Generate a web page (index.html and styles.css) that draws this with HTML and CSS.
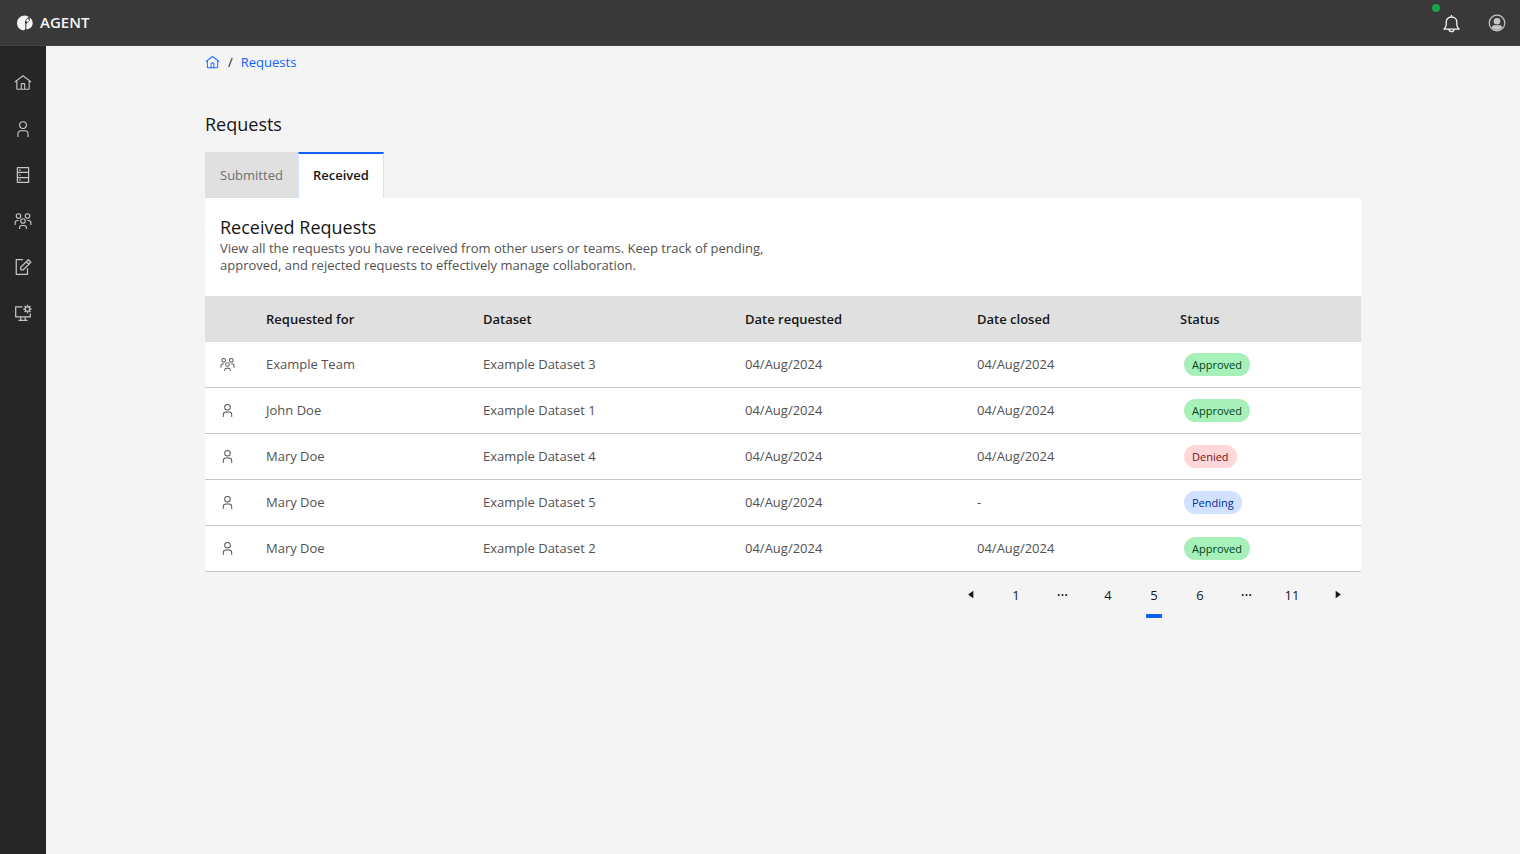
FILE: index.html
```html
<!DOCTYPE html>
<html lang="en">
<head>
    <meta charset="UTF-8">
    <meta name="viewport" content="width=device-width, initial-scale=1.0">
    <title>Requests</title>
    <link rel="stylesheet" href="styles.css">
</head>
<body>
    <!-- Shared icons -->
    <svg class="sprite" aria-hidden="true">
        <symbol id="icon-home" viewBox="0 0 32 32">
            <path d="M16.6123,2.2138a1.01,1.01,0,0,0-1.2427,0L1,13.4194l1.2427,1.5717L4,13.6209V26a2.0041,2.0041,0,0,0,2,2H26a2.0037,2.0037,0,0,0,2-2V13.63L29.7573,15,31,13.4282ZM18,26H14V18h4Zm2,0V18a2.0023,2.0023,0,0,0-2-2H14a2.002,2.002,0,0,0-2,2v8H6V12.0615l10-7.79,10,7.8005V26Z"/>
        </symbol>
        <symbol id="icon-user" viewBox="0 0 32 32">
            <path d="M16,4a5,5,0,1,1-5,5,5,5,0,0,1,5-5m0-2a7,7,0,1,0,7,7A7,7,0,0,0,16,2Z"/>
            <path d="M26,30H24V25a5,5,0,0,0-5-5H13a5,5,0,0,0-5,5v5H6V25a7,7,0,0,1,7-7h6a7,7,0,0,1,7,7Z"/>
        </symbol>
        <symbol id="icon-team" viewBox="0 0 32 32">
            <path d="M26,14H24v2h2a3,3,0,0,1,3,3v4h2V19A5,5,0,0,0,26,14Z"/>
            <path d="M24,4a3,3,0,1,1-3,3,3,3,0,0,1,3-3m0-2a5,5,0,1,0,5,5A5,5,0,0,0,24,2Z"/>
            <path d="M23,30H21V28a3,3,0,0,0-3-3H14a3,3,0,0,0-3,3v2H9V28a5,5,0,0,1,5-5h4a5,5,0,0,1,5,5Z"/>
            <path d="M16,13a3,3,0,1,1-3,3,3,3,0,0,1,3-3m0-2a5,5,0,1,0,5,5A5,5,0,0,0,16,11Z"/>
            <path d="M8,14H6a5,5,0,0,0-5,5v4H3V19a3,3,0,0,1,3-3H8Z"/>
            <path d="M8,4A3,3,0,1,1,5,7,3,3,0,0,1,8,4M8,2a5,5,0,1,0,5,5A5,5,0,0,0,8,2Z"/>
        </symbol>
    </svg>

    <header class="header">
        <a class="brand" href="#">
            <svg class="brand-logo" viewBox="0 0 16 16" aria-hidden="true">
                <path fill="#f4f4f4" d="M8 .5C3.500 .5 0 3.800 0 8c0 3.500 2.200 6.500 5.500 7.200 1.600.3 2.800-.4 2.800-2V9.500C7.600 7 8.300 4.500 10.300 3.300L12 2A7.500 7.500 0 0 0 8 .5Z"/>
                <path fill="#f4f4f4" d="M12.600 2.500C13.500 5 12.300 6.800 10.500 7.800 9.500 8.400 9.300 9.300 9.300 10.500V14.300C13 14.300 15.700 11.800 15.700 8 15.700 5.800 14.500 3.700 12.600 2.500Z"/>
                <circle cx="10.700" cy="5.500" r="1.400" fill="#f4f4f4"/>
            </svg>
            <span>AGENT</span>
        </a>
        <div class="header-actions">
            <button class="header-button" type="button" aria-label="Notifications">
                <svg class="bell" viewBox="0 0 20 20" aria-hidden="true">
                    <path fill="none" stroke="currentColor" stroke-width="1.300" stroke-linejoin="round" d="M10.500 2v2M10.500 4C7.300 4 5.200 6.200 5.200 9v2.800c0 1.900-.6 2.800-2.300 4.400h15.200c-1.700-1.600-2.300-2.500-2.300-4.400V9C15.800 6.200 13.700 4 10.500 4ZM8 16.300a2.500 2.400 0 0 0 5 0"/>
                </svg>
                <span class="dot"></span>
            </button>
            <button class="header-button" type="button" aria-label="Account">
                <svg class="avatar" viewBox="0 0 18 18" aria-hidden="true">
                    <circle cx="9" cy="9" r="7.800" fill="none" stroke="currentColor" stroke-width="1.200"/>
                    <circle cx="9" cy="7.200" r="3.300" fill="currentColor"/>
                    <path fill="currentColor" d="M4 14v-1.200A1.800 1.800 0 0 1 5.800 11.300h6.400A1.800 1.800 0 0 1 14 12.800V14A7 7 0 0 1 4 14Z"/>
                </svg>
            </button>
        </div>
    </header>

    <div class="layout">
        <nav class="sidebar" aria-label="Main">
            <a href="#" aria-label="Home"><svg class="nav-icon"><use href="#icon-home"/></svg></a>
            <a href="#" aria-label="Profile"><svg class="nav-icon"><use href="#icon-user"/></svg></a>
            <a href="#" aria-label="Datasets">
                <svg class="nav-icon" viewBox="0 0 32 32">
                    <path fill="none" stroke="currentColor" stroke-width="2.200" stroke-linejoin="round" d="M6 3H26V29H6ZM6 11.500H26M6 20.500H26"/>
                    <path d="M9 6.300h3v2H9zM9 15h3v2H9zM9 23.700h3v2H9z"/>
                </svg>
            </a>
            <a href="#" aria-label="Teams"><svg class="nav-icon"><use href="#icon-team"/></svg></a>
            <a href="#" aria-label="Requests">
                <svg class="nav-icon" viewBox="0 0 32 32">
                    <path fill="none" stroke="currentColor" stroke-width="2.200" stroke-linejoin="round" d="M16 3H4V29H24V18"/>
                    <path fill="none" stroke="currentColor" stroke-width="2.200" stroke-linejoin="round" d="M12 21v-4.500L25.500 3 30 7.500 16.500 21ZM21.800 6.700l4.500 4.500"/>
                </svg>
            </a>
            <a href="#" aria-label="System settings">
                <svg class="nav-icon" viewBox="0 0 32 32">
                    <path fill="none" stroke="currentColor" stroke-width="2.200" stroke-linejoin="round" d="M15 5H3V23H29V17M12 23v6M20 23v6M8 29H24"/>
                    <circle cx="24" cy="9" r="4" fill="none" stroke="currentColor" stroke-width="2.200"/>
                    <path fill="none" stroke="currentColor" stroke-width="2.400" d="M24 1.500v3M24 13.500v3M16.500 9h3M28.500 9h3M18.700 3.700l2.100 2.100M27.200 12.200l2.100 2.100M18.700 14.300l2.100-2.100M27.200 5.800l2.100-2.100"/>
                </svg>
            </a>
        </nav>

        <main class="content">
            <div class="page">
                <nav class="breadcrumb" aria-label="Breadcrumb">
                    <a href="#" aria-label="Home"><svg class="small-icon"><use href="#icon-home"/></svg></a>
                    <span>/</span>
                    <a href="#">Requests</a>
                </nav>

                <h1>Requests</h1>

                <div class="tabs" role="tablist">
                    <button class="tab" type="button" role="tab" aria-selected="false">Submitted</button>
                    <button class="tab active" type="button" role="tab" aria-selected="true">Received</button>
                </div>

                <section class="panel">
                    <div class="panel-header">
                        <h2>Received Requests</h2>
                        <p>View all the requests you have received from other users or teams. Keep track of pending, approved, and rejected requests to effectively manage collaboration.</p>
                    </div>

                    <table class="requests">
                        <colgroup>
                            <col class="col-icon">
                            <col class="col-name">
                            <col class="col-dataset">
                            <col class="col-requested">
                            <col class="col-closed">
                            <col>
                        </colgroup>
                        <thead>
                            <tr>
                                <th></th>
                                <th>Requested for</th>
                                <th>Dataset</th>
                                <th>Date requested</th>
                                <th>Date closed</th>
                                <th>Status</th>
                            </tr>
                        </thead>
                        <tbody>
                            <tr>
                                <td><svg class="small-icon"><use href="#icon-team"/></svg></td>
                                <td>Example Team</td>
                                <td>Example Dataset 3</td>
                                <td>04/Aug/2024</td>
                                <td>04/Aug/2024</td>
                                <td><span class="tag approved">Approved</span></td>
                            </tr>
                            <tr>
                                <td><svg class="small-icon"><use href="#icon-user"/></svg></td>
                                <td>John Doe</td>
                                <td>Example Dataset 1</td>
                                <td>04/Aug/2024</td>
                                <td>04/Aug/2024</td>
                                <td><span class="tag approved">Approved</span></td>
                            </tr>
                            <tr>
                                <td><svg class="small-icon"><use href="#icon-user"/></svg></td>
                                <td>Mary Doe</td>
                                <td>Example Dataset 4</td>
                                <td>04/Aug/2024</td>
                                <td>04/Aug/2024</td>
                                <td><span class="tag denied">Denied</span></td>
                            </tr>
                            <tr>
                                <td><svg class="small-icon"><use href="#icon-user"/></svg></td>
                                <td>Mary Doe</td>
                                <td>Example Dataset 5</td>
                                <td>04/Aug/2024</td>
                                <td>-</td>
                                <td><span class="tag pending">Pending</span></td>
                            </tr>
                            <tr>
                                <td><svg class="small-icon"><use href="#icon-user"/></svg></td>
                                <td>Mary Doe</td>
                                <td>Example Dataset 2</td>
                                <td>04/Aug/2024</td>
                                <td>04/Aug/2024</td>
                                <td><span class="tag approved">Approved</span></td>
                            </tr>
                        </tbody>
                    </table>
                </section>

                <nav class="pagination" aria-label="Pagination">
                    <button type="button" aria-label="Previous page">
                        <svg class="caret" viewBox="0 0 16 16"><path d="M11 3v8L5.500 7Z"/></svg>
                    </button>
                    <button type="button">1</button>
                    <button type="button" aria-label="More pages">
                        <svg class="caret" viewBox="0 0 16 16"><circle cx="4" cy="7.500" r="1.100"/><circle cx="8" cy="7.500" r="1.100"/><circle cx="12" cy="7.500" r="1.100"/></svg>
                    </button>
                    <button type="button">4</button>
                    <button class="current" type="button" aria-current="page">5</button>
                    <button type="button">6</button>
                    <button type="button" aria-label="More pages">
                        <svg class="caret" viewBox="0 0 16 16"><circle cx="4" cy="7.500" r="1.100"/><circle cx="8" cy="7.500" r="1.100"/><circle cx="12" cy="7.500" r="1.100"/></svg>
                    </button>
                    <button type="button">11</button>
                    <button type="button" aria-label="Next page">
                        <svg class="caret" viewBox="0 0 16 16"><path d="M5 3v8L10.500 7Z"/></svg>
                    </button>
                </nav>
            </div>
        </main>
    </div>
</body>
</html>
```
FILE: styles.css
```css
* {
    box-sizing: border-box;
}
body {
    margin: 0;
    min-height: 100vh;
    display: flex;
    flex-direction: column;
    background-color: #f4f4f4;
    color: #161616;
    font-family: "Segoe UI", "Open Sans", sans-serif;
    font-size: 13px;
    line-height: 17px;
}
h1, h2, p {
    margin: 0;
    font-weight: 400;
}
a {
    color: inherit;
    text-decoration: none;
}
button {
    border: none;
    padding: 0;
    background: none;
    color: inherit;
    font: inherit;
    cursor: pointer;
}
svg {
    display: block;
    fill: currentColor;
}
.sprite {
    position: absolute;
    width: 0;
    height: 0;
}

/* Header */
.header {
    display: flex;
    justify-content: space-between;
    height: 46px;
    background-color: #393939;
    border-bottom: 1px solid #444;
    color: #f4f4f4;
}
.brand {
    display: flex;
    align-items: center;
    gap: 7px;
    padding-left: 17px;
    font-size: 15px;
    font-weight: 600;
}
.brand-logo {
    width: 16px;
    height: 16px;
}
.header-actions {
    display: flex;
}
.header-button {
    position: relative;
    display: flex;
    align-items: center;
    justify-content: center;
    width: 46px;
}
.bell {
    width: 20px;
    height: 20px;
}
.avatar {
    width: 18px;
    height: 18px;
    color: #c6c6c6;
}
.dot {
    position: absolute;
    top: 4px;
    left: 4px;
    width: 8px;
    height: 8px;
    border-radius: 50%;
    background-color: #16a34a;
}

/* Sidebar */
.layout {
    display: flex;
    flex: 1;
}
.sidebar {
    display: flex;
    flex-direction: column;
    width: 46px;
    padding-top: 14px;
    background-color: #262626;
    color: #c6c6c6;
}
.sidebar a {
    display: flex;
    align-items: center;
    justify-content: center;
    height: 46px;
}
.nav-icon {
    width: 18px;
    height: 18px;
}
.small-icon {
    width: 15px;
    height: 15px;
}

/* Page */
.content {
    flex: 1;
    padding: 8px 16px;
}
.page {
    max-width: 1156px;
    margin: 0 auto;
}
.breadcrumb {
    display: flex;
    align-items: center;
    gap: 8px;
}
.breadcrumb a {
    color: #0f62fe;
}
h1, h2 {
    font-size: 18px;
    line-height: 24px;
}
h1 {
    margin-top: 41px;
    margin-bottom: 16px;
}
.tabs {
    display: flex;
}
.tab {
    height: 46px;
    padding: 0 15px;
    background-color: #e0e0e0;
    color: #6f6f6f;
}
.tab.active {
    padding: 0 14px 2px;
    border: 1px solid #d0e2ff;
    border-top: 2px solid #0f62fe;
    border-bottom: none;
    background-color: #fff;
    color: #161616;
    font-weight: 600;
}

/* Panel */
.panel {
    background-color: #fff;
}
.panel-header {
    padding: 17px 15px 22px;
}
.panel-header p {
    max-width: 580px;
    margin-top: 1px;
    color: #525252;
}
.requests {
    width: 100%;
    table-layout: fixed;
    border-collapse: separate;
    border-spacing: 0;
}
.col-icon {
    width: 46px;
}
.col-name {
    width: 217px;
}
.col-dataset {
    width: 262px;
}
.col-requested {
    width: 232px;
}
.col-closed {
    width: 203px;
}
.requests th, .requests td {
    height: 46px;
    padding: 0 15px;
    text-align: left;
}
.requests th {
    background-color: #e0e0e0;
    font-weight: 600;
}
.requests td {
    border-bottom: 1px solid #c6c6c6;
    color: #525252;
}
.tag {
    display: inline-block;
    margin-left: 4px;
    padding: 0 8px;
    border-radius: 12px;
    font-size: 11px;
    line-height: 23px;
    vertical-align: middle;
}
.requests .approved {
    background-color: #a7f0ba;
    color: #044317;
}
.requests .denied {
    background-color: #ffd7d9;
    color: #750e13;
}
.requests .pending {
    background-color: #d0e2ff;
    color: #002d9c;
}

/* Pagination */
.pagination {
    display: flex;
    justify-content: flex-end;
}
.pagination button {
    display: flex;
    align-items: center;
    justify-content: center;
    position: relative;
    width: 46px;
    height: 46px;
}
.pagination .current::after {
    content: "";
    position: absolute;
    bottom: 0;
    left: 15px;
    width: 16px;
    height: 4px;
    background-color: #0f62fe;
}
.caret {
    width: 15px;
    height: 15px;
}
```
